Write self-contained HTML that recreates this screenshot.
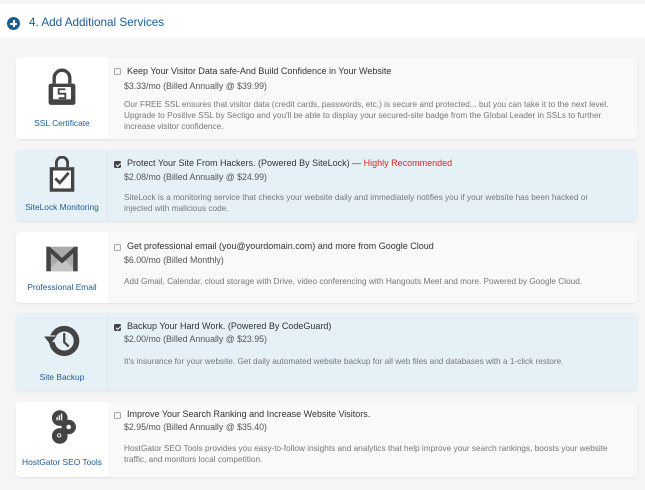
<!DOCTYPE html>
<html><head><meta charset="utf-8"><style>
*{margin:0;padding:0;box-sizing:border-box}
body{width:645px;height:490px;overflow:hidden;background:#f5f5f5;font-family:"Liberation Sans",sans-serif;position:relative}
.hdr{position:absolute;left:0;top:4px;width:645px;height:34px;background:#fff}
.hdr .t{position:absolute;left:29px;top:12px;font-size:11.7px;color:#1a5c97}
.plus{position:absolute;left:7px;top:13px;width:13px;height:13px;border-radius:50%;background:#1a5c97}
.plus:before{content:"";position:absolute;left:3px;top:5.5px;width:7px;height:2px;background:#fff}
.plus:after{content:"";position:absolute;left:5.5px;top:3px;width:2px;height:7px;background:#fff}
.card{position:absolute;left:16px;width:621px;border-radius:4px;background:#f9f9f9;box-shadow:0 1px 2px rgba(0,0,0,.08);overflow:hidden}
.card.sel{background:#e6f1f7}
.left{position:absolute;left:0;top:0;bottom:0;width:92px;background:#fff}
.sel .left{background:#e6f1f7;border-right:1px solid #dbe7ee}
.lbl{position:absolute;left:0;width:92px;text-align:center;font-size:8.4px;color:#1f5a94}
.ic{position:absolute;left:27px;width:38px;height:38px}
.cb{position:absolute;left:98px;width:7px;height:7px;border:1px solid #aaa;border-radius:1.5px;background:#f4f4f4}
.cb.on{background:#444;border-color:#444}
.cb.on:after{content:"";position:absolute;left:1.5px;top:0;width:2px;height:3.5px;border:solid #fff;border-width:0 1px 1px 0;transform:rotate(45deg)}
.tt{position:absolute;left:111px;font-size:9px;color:#333;white-space:nowrap}
.pr{position:absolute;left:108px;font-size:8.8px;color:#555;white-space:nowrap}
.ds{position:absolute;left:108px;font-size:8.25px;color:#777;line-height:11px;white-space:nowrap}
.red{color:#d22}
</style></head><body>
<div class="hdr"><div class="plus"></div><div class="t">4. Add Additional Services</div></div>

<div class="card" style="top:57px;height:82px">
<div class="left">
<svg class="ic" style="top:11px" viewBox="0 0 32 34"><path d="M9 14V9a7 7 0 0 1 14 0v5" fill="none" stroke="#444" stroke-width="3"/><rect x="4" y="14" width="24" height="19" rx="2" fill="#444"/><rect x="8" y="17" width="16" height="11" fill="#fff"/><path d="M19 19h-6v4h6v4h-6" fill="none" stroke="#444" stroke-width="1.6"/></svg>
<div class="lbl" style="top:61px">SSL Certificate</div></div>
<div class="cb" style="top:11px"></div>
<div class="tt" style="top:9px">Keep Your Visitor Data safe-And Build Confidence in Your Website</div>
<div class="pr" style="top:24px">$3.33/mo (Billed Annually @ $39.99)</div>
<div class="ds" style="top:42px">Our FREE SSL ensures that visitor data (credit cards, passwords, etc.) is secure and protected... but you can take it to the next level.<br>Upgrade to Positive SSL by Sectigo and you'll be able to display your secured-site badge from the Global Leader in SSLs to further<br>increase visitor confidence.</div>
</div>

<div class="card sel" style="top:150px;height:71px">
<div class="left">
<svg class="ic" style="top:6px" viewBox="0 0 32 34"><path d="M11 10V6a5 5 0 0 1 10 0v4" fill="none" stroke="#444" stroke-width="2.5"/><rect x="5" y="10" width="22" height="22" fill="#444"/><rect x="8" y="13" width="16" height="16" fill="#fff"/><path d="M10 20l4 4 8-9" fill="none" stroke="#444" stroke-width="2.5"/></svg>
<div class="lbl" style="top:52px">SiteLock Monitoring</div></div>
<div class="cb on" style="top:11px"></div>
<div class="tt" style="top:8px">Protect Your Site From Hackers. (Powered By SiteLock) — <span class="red">Highly Recommended</span></div>
<div class="pr" style="top:22px">$2.08/mo (Billed Annually @ $24.99)</div>
<div class="ds" style="top:42px">SiteLock is a monitoring service that checks your website daily and immediately notifies you if your website has been hacked or<br>injected with malicious code.</div>
</div>

<div class="card" style="top:232px;height:71px">
<div class="left">
<svg class="ic" style="top:8px" viewBox="0 0 32 34"><rect x="2" y="6" width="28" height="22" fill="#aaa"/><path d="M2 28L16 16 30 28" fill="#c4c4c4"/><path d="M2 6v22h4V12l10 9 10-9v16h4V6h-3L16 16 5 6z" fill="#444"/></svg>
<div class="lbl" style="top:50px">Professional Email</div></div>
<div class="cb" style="top:12px"></div>
<div class="tt" style="top:9px">Get professional email (you@yourdomain.com) and more from Google Cloud</div>
<div class="pr" style="top:23px">$6.00/mo (Billed Monthly)</div>
<div class="ds" style="top:44px">Add Gmail, Calendar, cloud storage with Drive, video conferencing with Hangouts Meet and more. Powered by Google Cloud.</div>
</div>

<div class="card sel" style="top:313px;height:78px">
<div class="left">
<svg class="ic" style="top:9px" viewBox="0 0 32 34"><circle cx="18" cy="17" r="11" fill="none" stroke="#444" stroke-width="5"/><rect x="4" y="12" width="6" height="6" fill="#e6f1f7"/><path d="M0 13h11l-5.5 7z" fill="#444"/><path d="M18 10v8l4 4" fill="none" stroke="#444" stroke-width="2"/></svg>
<div class="lbl" style="top:59px">Site Backup</div></div>
<div class="cb on" style="top:11px"></div>
<div class="tt" style="top:8px">Backup Your Hard Work. (Powered By CodeGuard)</div>
<div class="pr" style="top:21px">$2.00/mo (Billed Annually @ $23.95)</div>
<div class="ds" style="top:43px">It's insurance for your website. Get daily automated website backup for all web files and databases with a 1-click restore.</div>
</div>

<div class="card" style="top:402px;height:75px">
<div class="left">
<svg class="ic" style="top:6px" viewBox="0 0 32 34"><circle cx="14" cy="9" r="7" fill="#444"/><circle cx="22" cy="17" r="6.5" fill="#444"/><circle cx="14" cy="25" r="7" fill="#444"/><rect x="11" y="8" width="1.2" height="3" fill="#fff"/><rect x="13" y="6.5" width="1.2" height="4.5" fill="#fff"/><rect x="15" y="5" width="1.2" height="6" fill="#fff"/><circle cx="22" cy="17" r="2" fill="#fff"/><circle cx="13.5" cy="24.5" r="1.5" fill="none" stroke="#fff" stroke-width=".8"/></svg>
<div class="lbl" style="top:55px">HostGator SEO Tools</div></div>
<div class="cb" style="top:10px"></div>
<div class="tt" style="top:7px">Improve Your Search Ranking and Increase Website Visitors.</div>
<div class="pr" style="top:20px">$2.95/mo (Billed Annually @ $35.40)</div>
<div class="ds" style="top:41px">HostGator SEO Tools provides you easy-to-follow insights and analytics that help improve your search rankings, boosts your website<br>traffic, and monitors local competition.</div>
</div>
</body></html>
